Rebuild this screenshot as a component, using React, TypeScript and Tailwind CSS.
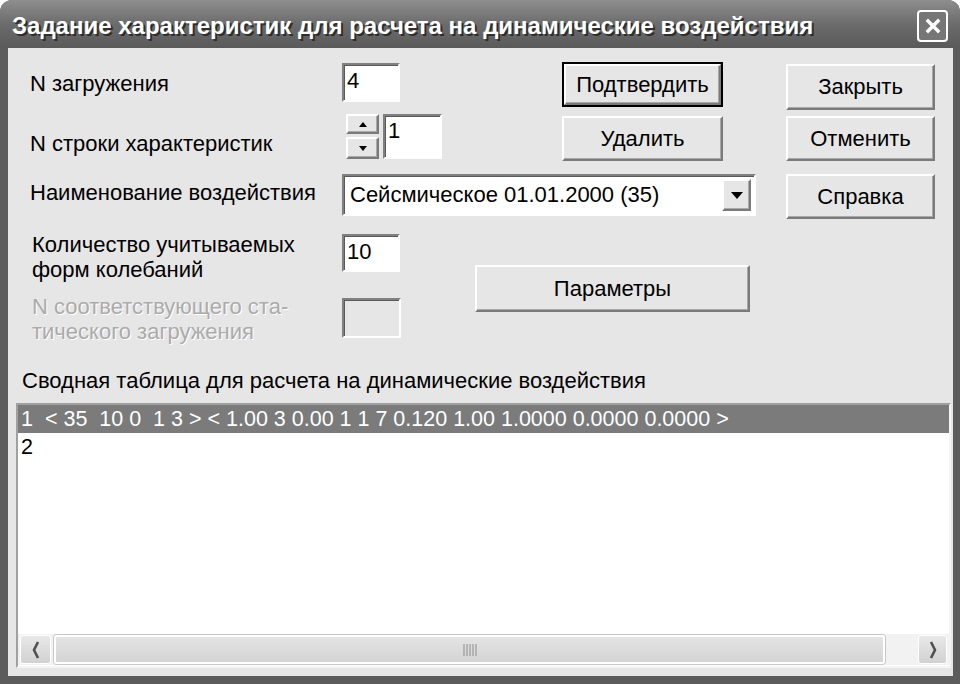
import React from 'react';

// Classic win-style bevels
const sunken =
  'border-2 border-t-[#808080] border-l-[#808080] border-b-white border-r-white shadow-[inset_1px_1px_0_#5a5a5a]';
const raised =
  'border-2 border-t-white border-l-white border-b-[#7a7a7a] border-r-[#7a7a7a] bg-[#e6e6e6] shadow-[inset_-1px_-1px_0_#a8a8a8]';

const Btn: React.FC<{ label: string; className?: string; isDefault?: boolean }> = ({ label, className = '', isDefault }) => {
  if (isDefault) {
    return (
      <div className={`border-2 border-black ${className}`}>
        <div className={`${raised} w-full h-full flex items-center justify-center text-[22px] leading-none`}>{label}</div>
      </div>
    );
  }
  return <div className={`${raised} flex items-center justify-center text-[22px] leading-none ${className}`}>{label}</div>;
};

const Chevron: React.FC<{ dir: 'left' | 'right' }> = ({ dir }) => (
  <svg width="10" height="20" viewBox="0 0 10 20">
    <polyline
      points={dir === 'left' ? '7,2 3,10 7,18' : '3,2 7,10 3,18'}
      fill="none"
      stroke="#505050"
      strokeWidth="2.6"
    />
  </svg>
);

const App: React.FC = () => {
  return (
    <div className="w-[960px] h-[684px] bg-[#5c5c5c] rounded-t-[12px] flex flex-col overflow-hidden font-['Liberation_Sans',Arial,sans-serif] text-black">
      {/* Title bar */}
      <div className="h-[48px] flex items-center justify-between pl-[12px] pr-[12px] pt-[4px] bg-linear-to-b from-[#8e8e8e] via-[#6c6c6c] to-[#5a5a5a]">
        <span className="text-white font-bold text-[24px] [text-shadow:2px_2px_0_#2e2e2e]">
          Задание характеристик для расчета на динамические воздействия
        </span>
        <div className="w-[31px] h-[32px] border-2 border-white rounded-[4px] bg-[#767676] flex items-center justify-center">
          <svg width="16" height="16" viewBox="0 0 16 16">
            <path d="M3 3 L13 13 M13 3 L3 13" stroke="white" strokeWidth="3.4" strokeLinecap="square" />
          </svg>
        </div>
      </div>

      {/* Body */}
      <div className="flex-1 ml-[8px] mr-[7px] mb-[8px] bg-[#e6e6e6] flex flex-col">
        {/* Row: N загружения */}
        <div className="flex items-start h-[48px] mt-[14px]">
          <div className="ml-[22px] w-[312px] mt-[10px] text-[22px] leading-[24px]">N загружения</div>
          <div className={`${sunken} bg-white w-[58px] h-[39px] mt-[1px] px-[3px] text-[22px] leading-[32px]`}>4</div>
          <Btn label="Подтвердить" isDefault className="ml-[162px] w-[161px] h-[45px]" />
          <Btn label="Закрыть" className="ml-[63px] w-[149px] h-[46px] mt-[2px]" />
        </div>

        {/* Row: N строки */}
        <div className="flex items-start h-[47px] mt-[4px]">
          <div className="ml-[22px] w-[316px] mt-[18px] text-[22px] leading-[24px]">N строки характеристик</div>
          <div className="w-[33px] flex flex-col gap-[3px]">
            <div className={`${raised} h-[20px] flex items-center justify-center`}>
              <svg width="8" height="5" viewBox="0 0 8 5"><path d="M4 0 L8 5 L0 5 Z" fill="black" /></svg>
            </div>
            <div className={`${raised} h-[22px] flex items-center justify-center`}>
              <svg width="8" height="5" viewBox="0 0 8 5"><path d="M0 0 L8 0 L4 5 Z" fill="black" /></svg>
            </div>
          </div>
          <div className={`${sunken} bg-white ml-[4px] w-[59px] h-[45px] px-[3px] text-[22px] leading-[30px]`}>1</div>
          <Btn label="Удалить" className="ml-[120px] w-[161px] h-[45px] mt-[2px]" />
          <Btn label="Отменить" className="ml-[63px] w-[149px] h-[45px] mt-[2px]" />
        </div>

        {/* Row: Наименование */}
        <div className="flex items-start h-[46px] mt-[13px]">
          <div className="ml-[22px] w-[312px] mt-[7px] text-[22px] leading-[24px]">Наименование воздействия</div>
          <div className={`${sunken} bg-white w-[414px] h-[42px] flex items-center pl-[6px] pr-[3px]`}>
            <span className="flex-1 text-[22px] leading-none">Сейсмическое 01.01.2000 (35)</span>
            <div className={`${raised} w-[29px] h-[32px] flex items-center justify-center`}>
              <svg width="12" height="7" viewBox="0 0 12 7"><path d="M0 0 L12 0 L6 7 Z" fill="black" /></svg>
            </div>
          </div>
          <Btn label="Справка" className="ml-[30px] w-[149px] h-[45px]" />
        </div>

        {/* Rows: формы колебаний + disabled */}
        <div className="flex items-start mt-[12px]">
          <div className="flex flex-col">
            <div className="flex items-start h-[50px]">
              <div className="ml-[24px] w-[310px] text-[22px] leading-[25px]">
                Количество учитываемых
                <br />
                форм колебаний
              </div>
              <div className={`${sunken} bg-white w-[58px] h-[38px] mt-[2px] px-[3px] text-[22px] leading-[32px]`}>10</div>
            </div>
            <div className="flex items-start mt-[12px]">
              <div className="ml-[24px] w-[310px] text-[22px] leading-[25px] text-[#ababab] [text-shadow:1px_1px_0_#ffffff]">
                N соответствующего ста-
                <br />
                тического загружения
              </div>
              <div className={`${sunken} w-[59px] h-[40px] mt-[4px]`} />
            </div>
          </div>
          <Btn label="Параметры" className="ml-[74px] mt-[33px] w-[275px] h-[47px]" />
        </div>

        <div className="ml-[14px] mt-[25px] text-[22px] leading-[24px]">
          Сводная таблица для расчета на динамические воздействия
        </div>

        {/* List box */}
        <div className="flex-1 ml-[8px] mr-[2px] mt-[10px] mb-[8px] border-2 border-t-[#a0a0a0] border-l-[#a0a0a0] border-b-[#f4f4f4] border-r-[#f4f4f4] bg-white flex flex-col">
          <div className="h-[28px] bg-[#7b7b7b] text-white pl-[3px] text-[21.5px] leading-[28px] whitespace-pre">
            {'1  < 35  10 0  1 3 > < 1.00 3 0.00 1 1 7 0.120 1.00 1.0000 0.0000 0.0000 >'}
          </div>
          <div className="h-[28px] pl-[3px] text-[21.5px] leading-[28px]">2</div>
          <div className="flex-1" />
          {/* Horizontal scrollbar */}
          <div className="h-[31px] mb-[1px] bg-[#f2f2f2] flex items-center px-[2px]">
            <div className="w-[31px] h-[29px] rounded-[3px] border border-white bg-linear-to-b from-[#e8e8e8] to-[#d2d2d2] flex items-center justify-center">
              <Chevron dir="left" />
            </div>
            <div className="ml-[3px] w-[831px] h-[29px] rounded-[3px] border-2 border-white bg-linear-to-b from-[#e4e4e4] to-[#d4d4d4] flex items-center justify-center shadow-[0_0_0_1px_#c8c8c8]">
              <svg width="14" height="14" viewBox="0 0 14 14">
                <path d="M1 1 V13 M4 1 V13 M7 1 V13 M10 1 V13 M13 1 V13" stroke="#9a9a9a" strokeWidth="1.2" />
              </svg>
            </div>
            <div className="flex-1" />
            <div className="w-[29px] h-[29px] rounded-[3px] border border-white bg-linear-to-b from-[#e8e8e8] to-[#d2d2d2] flex items-center justify-center">
              <Chevron dir="right" />
            </div>
          </div>
        </div>
      </div>
    </div>
  );
};

export default App;
